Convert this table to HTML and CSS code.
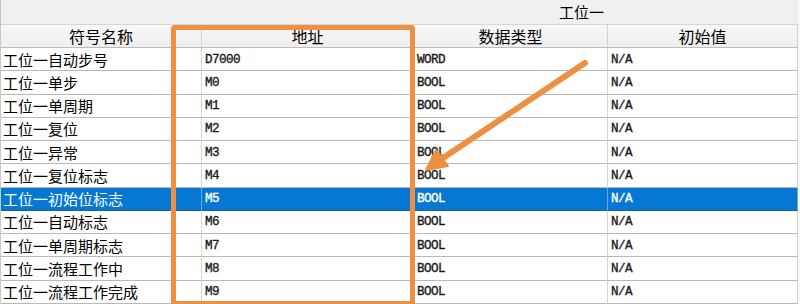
FILE: index.html
```html
<!DOCTYPE html>
<html lang="zh-CN">
<head>
<meta charset="utf-8">
<title>工位一 变量表</title>
<link rel="stylesheet" href="styles.css">
</head>
<body>
<div class="sheet">
  <div class="grid">
    <div class="group-blank"></div>
    <div class="group-title">工位一</div>

    <div class="head">符号名称</div>
    <div class="head">地址</div>
    <div class="head">数据类型</div>
    <div class="head">初始值</div>

    <div class="cell name">工位一自动步号</div><div class="cell code">D7000</div><div class="cell code">WORD</div><div class="cell code">N/A</div>
    <div class="cell name">工位一单步</div><div class="cell code">M0</div><div class="cell code">BOOL</div><div class="cell code">N/A</div>
    <div class="cell name">工位一单周期</div><div class="cell code">M1</div><div class="cell code">BOOL</div><div class="cell code">N/A</div>
    <div class="cell name">工位一复位</div><div class="cell code">M2</div><div class="cell code">BOOL</div><div class="cell code">N/A</div>
    <div class="cell name">工位一异常</div><div class="cell code">M3</div><div class="cell code">BOOL</div><div class="cell code">N/A</div>
    <div class="cell name">工位一复位标志</div><div class="cell code">M4</div><div class="cell code">BOOL</div><div class="cell code">N/A</div>
    <div class="cell name sel">工位一初始位标志</div><div class="cell code sel">M5</div><div class="cell code sel">BOOL</div><div class="cell code sel">N/A</div>
    <div class="cell name">工位一自动标志</div><div class="cell code">M6</div><div class="cell code">BOOL</div><div class="cell code">N/A</div>
    <div class="cell name">工位一单周期标志</div><div class="cell code">M7</div><div class="cell code">BOOL</div><div class="cell code">N/A</div>
    <div class="cell name">工位一流程工作中</div><div class="cell code">M8</div><div class="cell code">BOOL</div><div class="cell code">N/A</div>
    <div class="cell name">工位一流程工作完成</div><div class="cell code">M9</div><div class="cell code">BOOL</div><div class="cell code">N/A</div>
  </div>

  <!-- annotation: frame around the address column -->
  <div class="frame"></div>

  <!-- annotation: arrow pointing at the data type column -->
  <svg class="arrow" width="800" height="304" viewBox="0 0 800 304">
    <line x1="585" y1="63" x2="440" y2="160" stroke="#ef8f41" stroke-width="6" stroke-linecap="round"/>
    <polygon points="426,170 448,166 436,150" fill="#ef8f41" stroke="#ef8f41" stroke-width="2" stroke-linejoin="round"/>
  </svg>
</div>
</body>
</html>
```

FILE: styles.css
```css
html, body {
  margin: 0;
  padding: 0;
  background: #ffffff;
}

.sheet {
  position: relative;
  width: 800px;
  height: 304px;
  overflow: hidden;
  background: #f7f7f7;
}

.grid {
  display: grid;
  grid-template-columns: 201px 212px 194px 190px;
  grid-template-rows: 25px 23px repeat(11, 23.27px);
  border-left: 1px solid #c9c9c9;
  width: 797px;
  box-sizing: border-box;
  font-family: "Noto Sans CJK SC", "Noto Sans", sans-serif;
  color: #000;
}

.group-blank {
  background: #f0f0f0;
  border-bottom: 1px solid #d6d6d6;
}

.group-title {
  grid-column: 2 / 5;
  background: #f0f0f0;
  border-bottom: 1px solid #d6d6d6;
  font-size: 15px;
  line-height: 24px;
  padding-left: 357px;
}

.head {
  background: linear-gradient(#f8f8f8, #eeeeee);
  border-right: 1px solid #d2d2d2;
  border-bottom: 1px solid #bdbdbd;
  font-size: 16px;
  display: flex;
  align-items: center;
  justify-content: center;
  box-sizing: border-box;
}

.cell {
  background: #ffffff;
  border-right: 1px solid #d4d4d4;
  border-bottom: 1px solid #b9b9b9;
  display: flex;
  align-items: center;
  padding-left: 3px;
  box-sizing: border-box;
  white-space: nowrap;
  overflow: hidden;
}

.name {
  font-size: 15px;
  padding-left: 2px;
}

.code {
  font-family: "Liberation Mono", "Courier New", monospace;
  font-size: 12.6px;
  letter-spacing: -0.56px;
  -webkit-text-stroke: 0.35px #1a1a1a;
  color: #1a1a1a;
  padding-top: 1px;
}

.sel {
  background: #0678d4;
  color: #ffffff;
  border-right-color: #6aa9e4;
  border-bottom-color: #1b5f9e;
}

.code.sel {
  -webkit-text-stroke: 0.35px #ffffff;
}

.frame {
  position: absolute;
  left: 171px;
  top: 25px;
  width: 244px;
  height: 281px;
  border: 5px solid #ef8f41;
  border-radius: 4px;
  box-sizing: border-box;
}

.arrow {
  position: absolute;
  left: 0;
  top: 0;
}
```
